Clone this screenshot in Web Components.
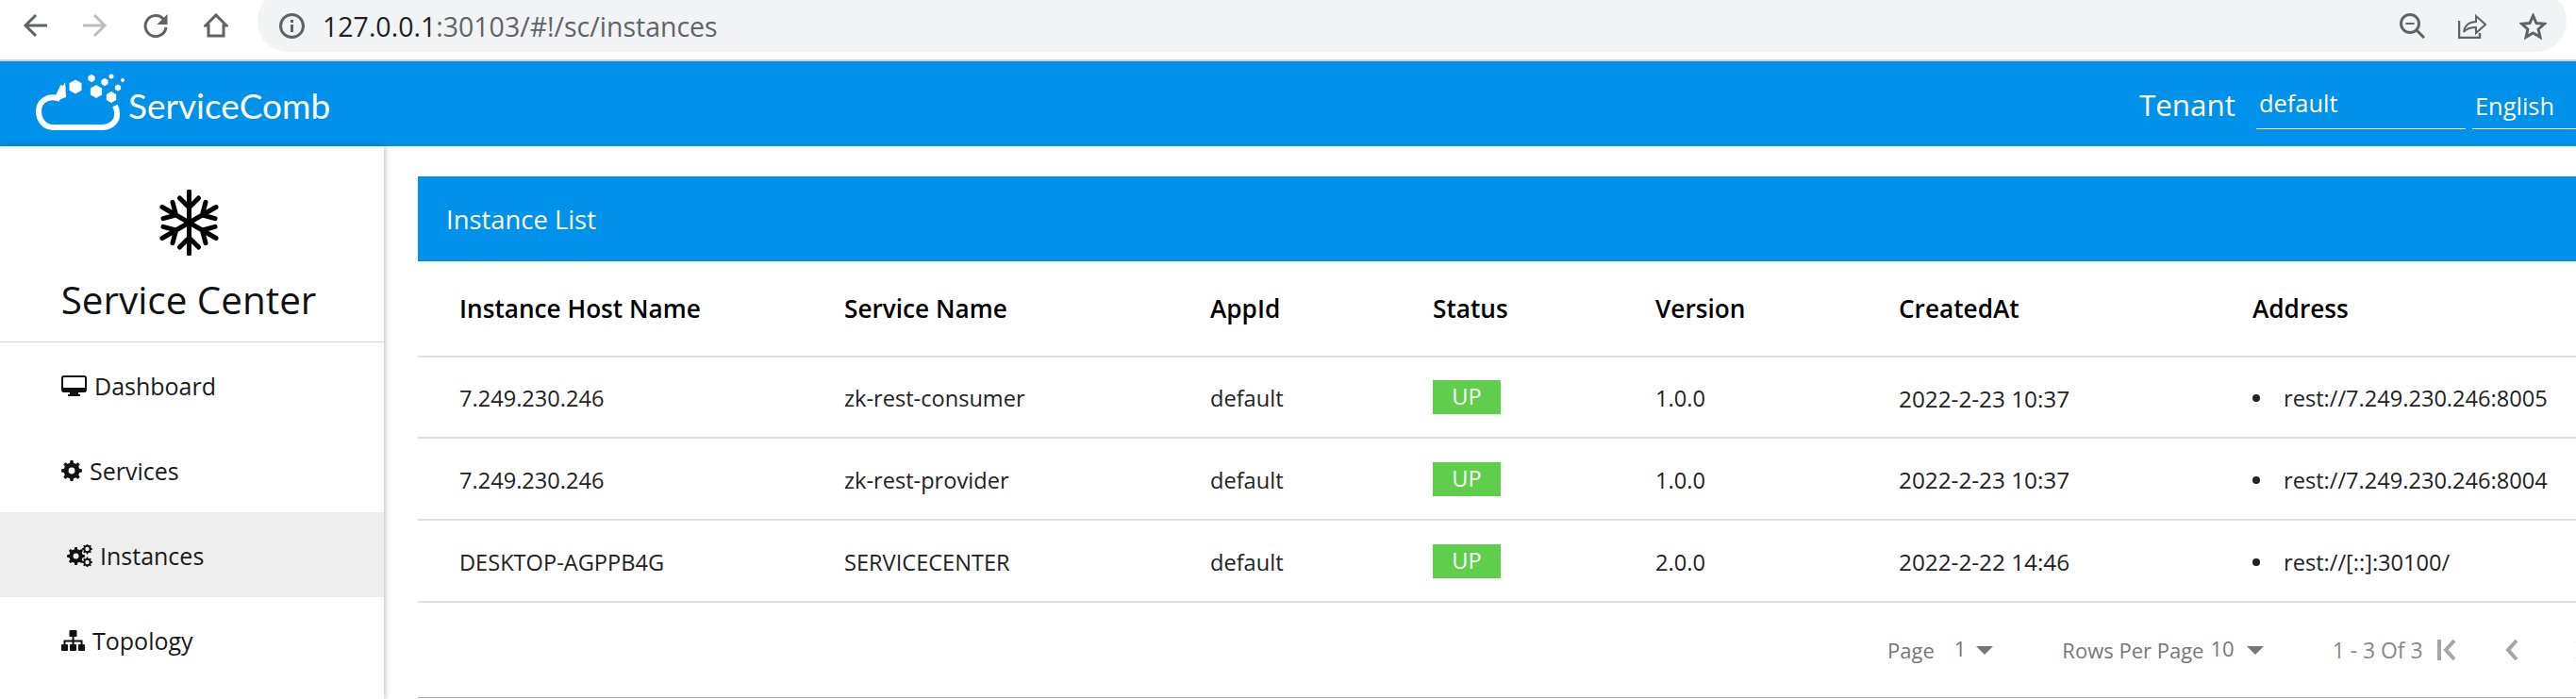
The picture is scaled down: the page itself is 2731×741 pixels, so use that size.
<!DOCTYPE html>
<html>
<head>
<meta charset="utf-8">
<title>Service Center</title>
<style>
  html, body { margin: 0; padding: 0; background: #fff; }
  body { width: 2731px; height: 741px; overflow: hidden; font-family: "Open Sans", "Liberation Sans", sans-serif; color: #222; }
  page-body { display: flex; height: 586px; }
  nav-item svg { display: block; }
</style>
</head>
<body>
<browser-bar></browser-bar>
<app-header></app-header>
<page-body>
  <side-nav>
    <nav-item>
      <svg slot="icon" width="27" height="22" viewBox="0 0 27 22"><rect x="1" y="1" width="25" height="16" rx="2" fill="none" stroke="#111" stroke-width="2"/><path d="M1 13h25v3a2 2 0 0 1-2 2H3a2 2 0 0 1-2-2z" fill="#111"/><path d="M9 18h9v2h2v2H7v-2h2z" fill="#111"/></svg>
      Dashboard
    </nav-item>
    <nav-item>
      <svg slot="icon" data-gears="services" width="22" height="22" viewBox="0 0 22 22"></svg>
      Services
    </nav-item>
    <nav-item active style="--left:71px">
      <svg slot="icon" data-gears="instances" width="27" height="24" viewBox="0 0 27 24"></svg>
      Instances
    </nav-item>
    <nav-item>
      <svg slot="icon" width="25" height="22" viewBox="0 0 25 22" fill="#111"><rect x="8.500" y="0" width="8" height="7" rx="1"/><rect x="0" y="15" width="7" height="7" rx="1"/><rect x="9" y="15" width="7" height="7" rx="1"/><rect x="18" y="15" width="7" height="7" rx="1"/><path d="M11.500 7h2v3.500h9V15h-2v-2.500h-7V15h-2v-2.500h-7V15h-2v-4.500h9z"/></svg>
      Topology
    </nav-item>
  </side-nav>
  <instance-panel title-text="Instance List">
    <instance-row header host="Instance Host Name" service="Service Name" app="AppId" status="Status" version="Version" created="CreatedAt" address="Address"></instance-row>
    <instance-row host="7.249.230.246" service="zk-rest-consumer" app="default" status="UP" version="1.0.0" created="2022-2-23 10:37" address="rest://7.249.230.246:8005" style="--h:86px"></instance-row>
    <instance-row host="7.249.230.246" service="zk-rest-provider" app="default" status="UP" version="1.0.0" created="2022-2-23 10:37" address="rest://7.249.230.246:8004"></instance-row>
    <instance-row host="DESKTOP-AGPPB4G" service="SERVICECENTER" app="default" status="UP" version="2.0.0" created="2022-2-22 14:46" address="rest://[::]:30100/"></instance-row>
    <table-pager slot="footer"></table-pager>
  </instance-panel>
</page-body>

<script>
// little helpers for the drawn icons
function gearPath(cx, cy, ro, ri, hole, teeth) {
  let d = '';
  const step = Math.PI * 2 / teeth;
  for (let i = 0; i < teeth; i++) {
    const a = i * step;
    const pts = [[ri, a - step * 0.5], [ri, a - step * 0.3], [ro, a - step * 0.17], [ro, a + step * 0.17], [ri, a + step * 0.3]];
    pts.forEach((p, j) => {
      const x = (cx + p[0] * Math.cos(p[1])).toFixed(2);
      const y = (cy + p[0] * Math.sin(p[1])).toFixed(2);
      d += (i === 0 && j === 0 ? 'M' : 'L') + x + ' ' + y;
    });
  }
  d += 'Z';
  d += `M${cx - hole} ${cy}a${hole} ${hole} 0 1 0 ${hole * 2} 0a${hole} ${hole} 0 1 0 ${-hole * 2} 0Z`;
  return d;
}

function hexPoints(cx, cy, r) {
  const out = [];
  for (let i = 0; i < 6; i++) {
    const a = Math.PI / 6 + i * Math.PI / 3;
    out.push((cx + r * Math.cos(a)).toFixed(1) + ',' + (cy + r * Math.sin(a)).toFixed(1));
  }
  return out.join(' ');
}

document.querySelectorAll('svg[data-gears]').forEach(svg => {
  const paths = svg.dataset.gears === 'services'
    ? [gearPath(11, 11, 11, 8.4, 3.4, 8)]
    : [gearPath(9.5, 12.5, 9.5, 7.2, 3, 8), gearPath(21.5, 5, 5.5, 4.2, 2.2, 8), gearPath(21.5, 19, 5.5, 4.2, 2.2, 8)];
  svg.innerHTML = paths.map(d => `<path fill="#111" fill-rule="evenodd" d="${d}"/>`).join('');
});

/********************************* BrowserBar ******************************************/
let browserBarTmpl = document.createElement('template');
browserBarTmpl.innerHTML = `
  <style>
    :host { display: flex; height: 63px; border-bottom: 2px solid #d2d2d2; background: #fff; overflow: hidden; box-sizing: content-box; }
    .nav { display: flex; gap: 38px; padding: 14px 0 0 24px; }
    svg { display: block; flex: none; }
    .omni {
      flex: none; width: 2448px; height: 65px; margin: -10px 0 0 31px; background: #f1f3f4; border-radius: 32px;
      display: flex; align-items: center; box-sizing: border-box; padding: 10px 0 0 23px;
    }
    .url { margin-left: 19px; font: 28.500px "Open Sans", sans-serif; color: #5f6368; white-space: nowrap; }
    .url b { font-weight: 400; color: #202124; }
    .tools { margin-left: auto; display: flex; padding-right: 21px; gap: 35px; }
  </style>
  <div class="nav">
    <svg width="26" height="26" viewBox="0 0 26 26" fill="none" stroke="#5f6368" stroke-width="3"><path d="M26 13H3M14 2 3 13l11 11"/></svg>
    <svg width="26" height="26" viewBox="0 0 26 26" fill="none" stroke="#bdbdbd" stroke-width="3"><path d="M0 13h23M12 2l11 11-11 11"/></svg>
    <svg width="26" height="26" viewBox="0 0 26 26"><path d="M21.500 6.500A11 11 0 1 0 24 15" fill="none" stroke="#5f6368" stroke-width="3"/><path d="M25.500 1v11h-11z" fill="#5f6368"/></svg>
    <svg width="26" height="26" viewBox="0 0 26 26" fill="none" stroke="#5f6368" stroke-width="3"><path d="M13 2 24 13h-3v11H5V13H2z"/></svg>
  </div>
  <div class="omni">
    <svg width="27" height="27" viewBox="0 0 27 27" fill="none" stroke="#5f6368" stroke-width="3"><circle cx="13.500" cy="13.500" r="12"/><path d="M13.500 12v8"/><path d="M13.500 7v3"/></svg>
    <span class="url"><b>127.0.0.1</b>:30103/#!/sc/instances</span>
    <div class="tools">
      <svg width="27" height="27" viewBox="0 0 27 27" fill="none" stroke="#5f6368" stroke-width="3"><circle cx="11" cy="11" r="9.500"/><path d="M18 18l8 8"/><path d="M6.500 11h9" stroke-width="2"/></svg>
      <svg width="30" height="27" viewBox="0 0 30 27" fill="none" stroke="#5f6368" stroke-width="2"><path d="M1 8v18h22v-5" stroke-width="2.500"/><path d="M6 20c1-7 6-11 13-11V3l10 9-10 9v-6c-6 0-10 1-13 5z"/></svg>
      <svg width="29" height="28" viewBox="0 0 29 28" fill="none" stroke="#5f6368" stroke-width="3"><path d="M14.500 2.500l3.500 8 8.500.8-6.400 5.700 1.900 8.400-7.500-4.400-7.500 4.400 1.900-8.400-6.400-5.700 8.500-.8z"/></svg>
    </div>
  </div>`;

class BrowserBar extends HTMLElement {
  constructor() {
    super();
    this.attachShadow({ mode: 'open' });
    this.shadowRoot.appendChild(browserBarTmpl.content.cloneNode(true));
  }
}
customElements.define('browser-bar', BrowserBar);

/********************************* AppHeader ******************************************/
let appHeaderTmpl = document.createElement('template');
appHeaderTmpl.innerHTML = `
  <style>
    :host { display: flex; align-items: center; height: 90px; padding-left: 35px; background: #0091ea; color: #fff; }
    .logo { display: block; margin-top: -10px; flex: none; }
    .name { margin: 3px 0 0 -9px; font: 400 37px Lato, "Open Sans", sans-serif; }
    .tenant { margin-left: auto; font-size: 31.400px; }
    .select { box-sizing: border-box; height: 50px; border-bottom: 1px solid #fff; display: flex; align-items: center; font-size: 25.400px; margin-top: 4px; }
    .ns { width: 222px; margin-left: 22px; padding-left: 3px; }
    .ns span { margin-top: -6px; }
    .lang { width: 110px; margin-left: 7px; padding-left: 3px; }
  </style>
  <svg class="logo" id="logo" width="110" height="70" viewBox="0 0 110 70"></svg>
  <span class="name">ServiceComb</span>
  <span class="tenant">Tenant</span>
  <div class="select ns"><span>default</span></div>
  <div class="select lang"><span>English</span></div>`;

class AppHeader extends HTMLElement {
  constructor() {
    super();
    this.attachShadow({ mode: 'open' });
    this.shadowRoot.appendChild(appHeaderTmpl.content.cloneNode(true));
    const hexes = [[45, 22, 7.5], [62, 13, 4.2], [67, 27, 7], [76, 17, 4.2], [83, 33, 6], [90, 23, 3.6], [83, 11, 2.8], [95, 15, 2.2]];
    this.shadowRoot.querySelector('#logo').innerHTML =
      `<path d="M32 21 26 34C15 31 6 38 6 48c0 10 7 17 15 17h52c10 0 17-7 16-15 0-3-1-6-2-8" fill="none" stroke="#fff" stroke-width="6"/>` +
      `<path d="M34 17 24 37l11-4z" fill="#fff"/>` +
      hexes.map(h => `<polygon fill="#fff" points="${hexPoints(h[0], h[1], h[2])}"/>`).join('');
  }
}
customElements.define('app-header', AppHeader);

/********************************* SideNav ******************************************/
let sideNavTmpl = document.createElement('template');
sideNavTmpl.innerHTML = `
  <style>
    :host { display: block; flex: none; width: 407px; height: 100%; background: #fff; box-shadow: 2px 0 5px rgba(0,0,0,.22); position: relative; }
    .brand { height: 208px; box-sizing: border-box; padding-right: 7px; border-bottom: 1px solid #d4d4d4; display: flex; flex-direction: column; align-items: center; }
    svg { margin-top: 46px; display: block; }
    h1 { margin: 22px 0 0; font: 400 40.400px "Open Sans", sans-serif; color: #111; line-height: 50px; white-space: nowrap; }
  </style>
  <div class="brand">
    <svg id="flake" width="63" height="70" viewBox="-31.500 -35 63 70"></svg>
    <h1>Service Center</h1>
  </div>
  <slot></slot>`;

class SideNav extends HTMLElement {
  constructor() {
    super();
    this.attachShadow({ mode: 'open' });
    this.shadowRoot.appendChild(sideNavTmpl.content.cloneNode(true));
    // one arm, turned six times
    const arm = 'M0 0V-33M-10 -26 0 -16 10 -26';
    let out = '';
    for (let i = 0; i < 6; i++) {
      out += `<path d="${arm}" transform="rotate(${i * 60})" fill="none" stroke="#000" stroke-width="5" stroke-linecap="round"/>`;
    }
    this.shadowRoot.querySelector('#flake').innerHTML = out;
  }
}
customElements.define('side-nav', SideNav);

/********************************* NavItem ******************************************/
let navItemTmpl = document.createElement('template');
navItemTmpl.innerHTML = `
  <style>
    :host { display: flex; align-items: center; height: 90px; box-sizing: border-box; padding: 2px 0 0 var(--left, 65px); font-size: 25px; color: #1a1a1a; }
    :host([active]) { background: #eee; }
    .icon { display: block; margin-right: 8px; }
  </style>
  <span class="icon"><slot name="icon"></slot></span>
  <slot></slot>`;

class NavItem extends HTMLElement {
  constructor() {
    super();
    this.attachShadow({ mode: 'open' });
    this.shadowRoot.appendChild(navItemTmpl.content.cloneNode(true));
  }
}
customElements.define('nav-item', NavItem);

/********************************* InstancePanel ******************************************/
let instancePanelTmpl = document.createElement('template');
instancePanelTmpl.innerHTML = `
  <style>
    :host { display: block; flex: none; width: 2340px; margin: 32px 0 0 36px; }
    .title { height: 90px; background: #0091ea; color: #fff; display: flex; align-items: center; padding-left: 30px; font-size: 27.400px; }
  </style>
  <div class="title"></div>
  <slot></slot>
  <slot name="footer"></slot>`;

class InstancePanel extends HTMLElement {
  constructor() {
    super();
    this.attachShadow({ mode: 'open' });
    this.shadowRoot.appendChild(instancePanelTmpl.content.cloneNode(true));
    this.shadowRoot.querySelector('.title').textContent = this.getAttribute('title-text');
  }
}
customElements.define('instance-panel', InstancePanel);

/********************************* InstanceRow ******************************************/
let instanceRowTmpl = document.createElement('template');
instanceRowTmpl.innerHTML = `
  <style>
    :host {
      display: grid; grid-template-columns: 408px 388px 236px 236px 258px 375px 1fr; align-items: center;
      height: var(--h, 87px); box-sizing: border-box; padding: 2px 0 0 44px; border-bottom: 2px solid #e0e0e0;
      font-size: 23.600px; color: #222;
    }
    :host([header]) { height: 102px; padding-top: 0; font-size: 26.200px; font-weight: 600; color: #000; }
    :host(:not([header])) .cell[data-f="created"] { font-size: 24.300px; }
    .badge { display: flex; align-items: center; justify-content: center; box-sizing: border-box; width: 72px; height: 36px; padding-bottom: 2px; margin-top: -2px; background: #5fce4c; color: #fff; }
    ul { margin: 0; padding: 0; list-style: none; }
    li { display: flex; align-items: center; }
    li::before { content: ""; flex: none; width: 8px; height: 8px; border-radius: 50%; background: #222; margin-right: 25px; }
    .cell { white-space: nowrap; }
  </style>
  <div class="cell" data-f="host"></div>
  <div class="cell" data-f="service"></div>
  <div class="cell" data-f="app"></div>
  <div class="cell" data-f="status"></div>
  <div class="cell" data-f="version"></div>
  <div class="cell" data-f="created"></div>
  <div class="cell" data-f="address"></div>`;

class InstanceRow extends HTMLElement {
  constructor() {
    super();
    this.attachShadow({ mode: 'open' });
    this.shadowRoot.appendChild(instanceRowTmpl.content.cloneNode(true));
  }

  connectedCallback() {
    const isHeader = this.hasAttribute('header');
    this.shadowRoot.querySelectorAll('.cell').forEach(cell => {
      const field = cell.dataset.f;
      const value = this.getAttribute(field);
      if (!isHeader && field === 'status') {
        cell.innerHTML = `<span class="badge">${value}</span>`;
      } else if (!isHeader && field === 'address') {
        cell.innerHTML = `<ul><li>${value}</li></ul>`;
      } else {
        cell.textContent = value;
      }
    });
  }
}
customElements.define('instance-row', InstanceRow);

/********************************* TablePager ******************************************/
let tablePagerTmpl = document.createElement('template');
tablePagerTmpl.innerHTML = `
  <style>
    :host { display: flex; align-items: center; height: 101px; box-sizing: border-box; padding-left: 1558px; border-bottom: 1px solid #aaa; font-size: 22px; color: #777; white-space: nowrap; }
    .tri { width: 0; height: 0; border: 9px solid transparent; border-top: 9px solid #777; border-bottom: 0; }
    .num { margin-top: -5px; }
    .count { font-size: 22.900px; color: #888; }
    svg { display: block; flex: none; }
  </style>
  <span>Page</span>
  <span class="num" style="margin-left:21px">1</span>
  <span class="tri" style="margin-left:11px"></span>
  <span style="margin-left:73px">Rows Per Page</span>
  <span class="num" style="margin-left:7px">10</span>
  <span class="tri" style="margin-left:13px"></span>
  <span class="count" style="margin-left:73px">1 - 3 Of 3</span>
  <svg style="margin-left:15px" width="20" height="24" viewBox="0 0 20 24" fill="none" stroke="#a6a6a6"><path d="M2 1v22" stroke-width="4"/><path d="M18 2 9 12l9 10" stroke-width="4"/></svg>
  <svg style="margin-left:52px" width="14" height="24" viewBox="0 0 14 24" fill="none" stroke="#a6a6a6" stroke-width="4"><path d="M12 2 3 12l9 10"/></svg>
  <svg style="margin-left:60px" width="14" height="24" viewBox="0 0 14 24" fill="none" stroke="#a6a6a6" stroke-width="4"><path d="m2 2 9 10-9 10"/></svg>`;

class TablePager extends HTMLElement {
  constructor() {
    super();
    this.attachShadow({ mode: 'open' });
    this.shadowRoot.appendChild(tablePagerTmpl.content.cloneNode(true));
  }
}
customElements.define('table-pager', TablePager);
</script>
</body>
</html>
